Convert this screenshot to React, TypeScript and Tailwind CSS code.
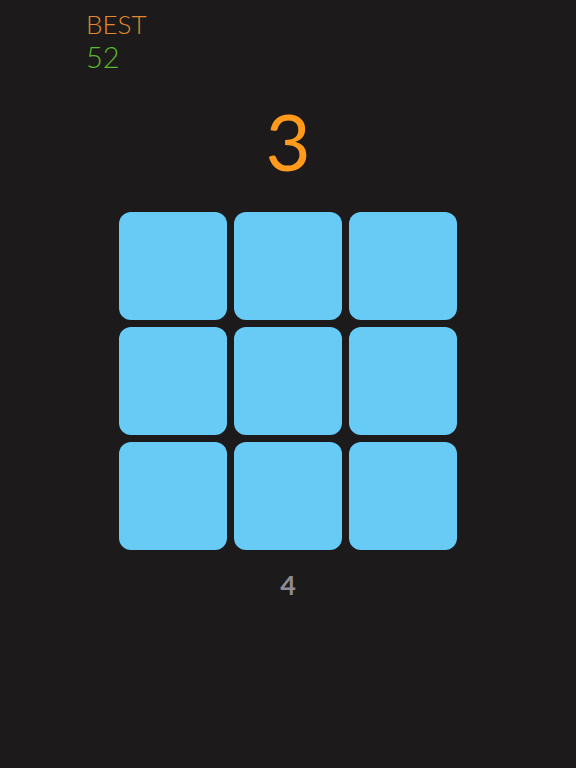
export default function App() {
  const tiles = Array.from({ length: 9 });
  return (
    <main
      className="w-[576px] h-[768px] bg-[#1c1a1b] flex flex-col"
      style={{ fontFamily: "Lato, 'Noto Sans', sans-serif" }}
    >
      <div className="pl-[86px] pt-[8px] flex flex-col">
        <div className="text-[26px] leading-[32px] font-light text-[#e0892c]">BEST</div>
        <div className="text-[29px] leading-[34px] font-light text-[#5cb82c]">52</div>
      </div>
      <div className="mt-[27px] text-center text-[78px] leading-[80px] text-[#ff9a1c]">3</div>
      <div className="mt-[31px] mx-auto grid grid-cols-3 gap-[7px] w-[338px]">
        {tiles.map((_, i) => (
          <div key={i} className="h-[108px] rounded-[12px] bg-[#67cbf6]" />
        ))}
      </div>
      <div className="mt-[19px] text-center text-[27px] leading-[32px] font-bold text-[#8f8b95]">4</div>
    </main>
  );
}
